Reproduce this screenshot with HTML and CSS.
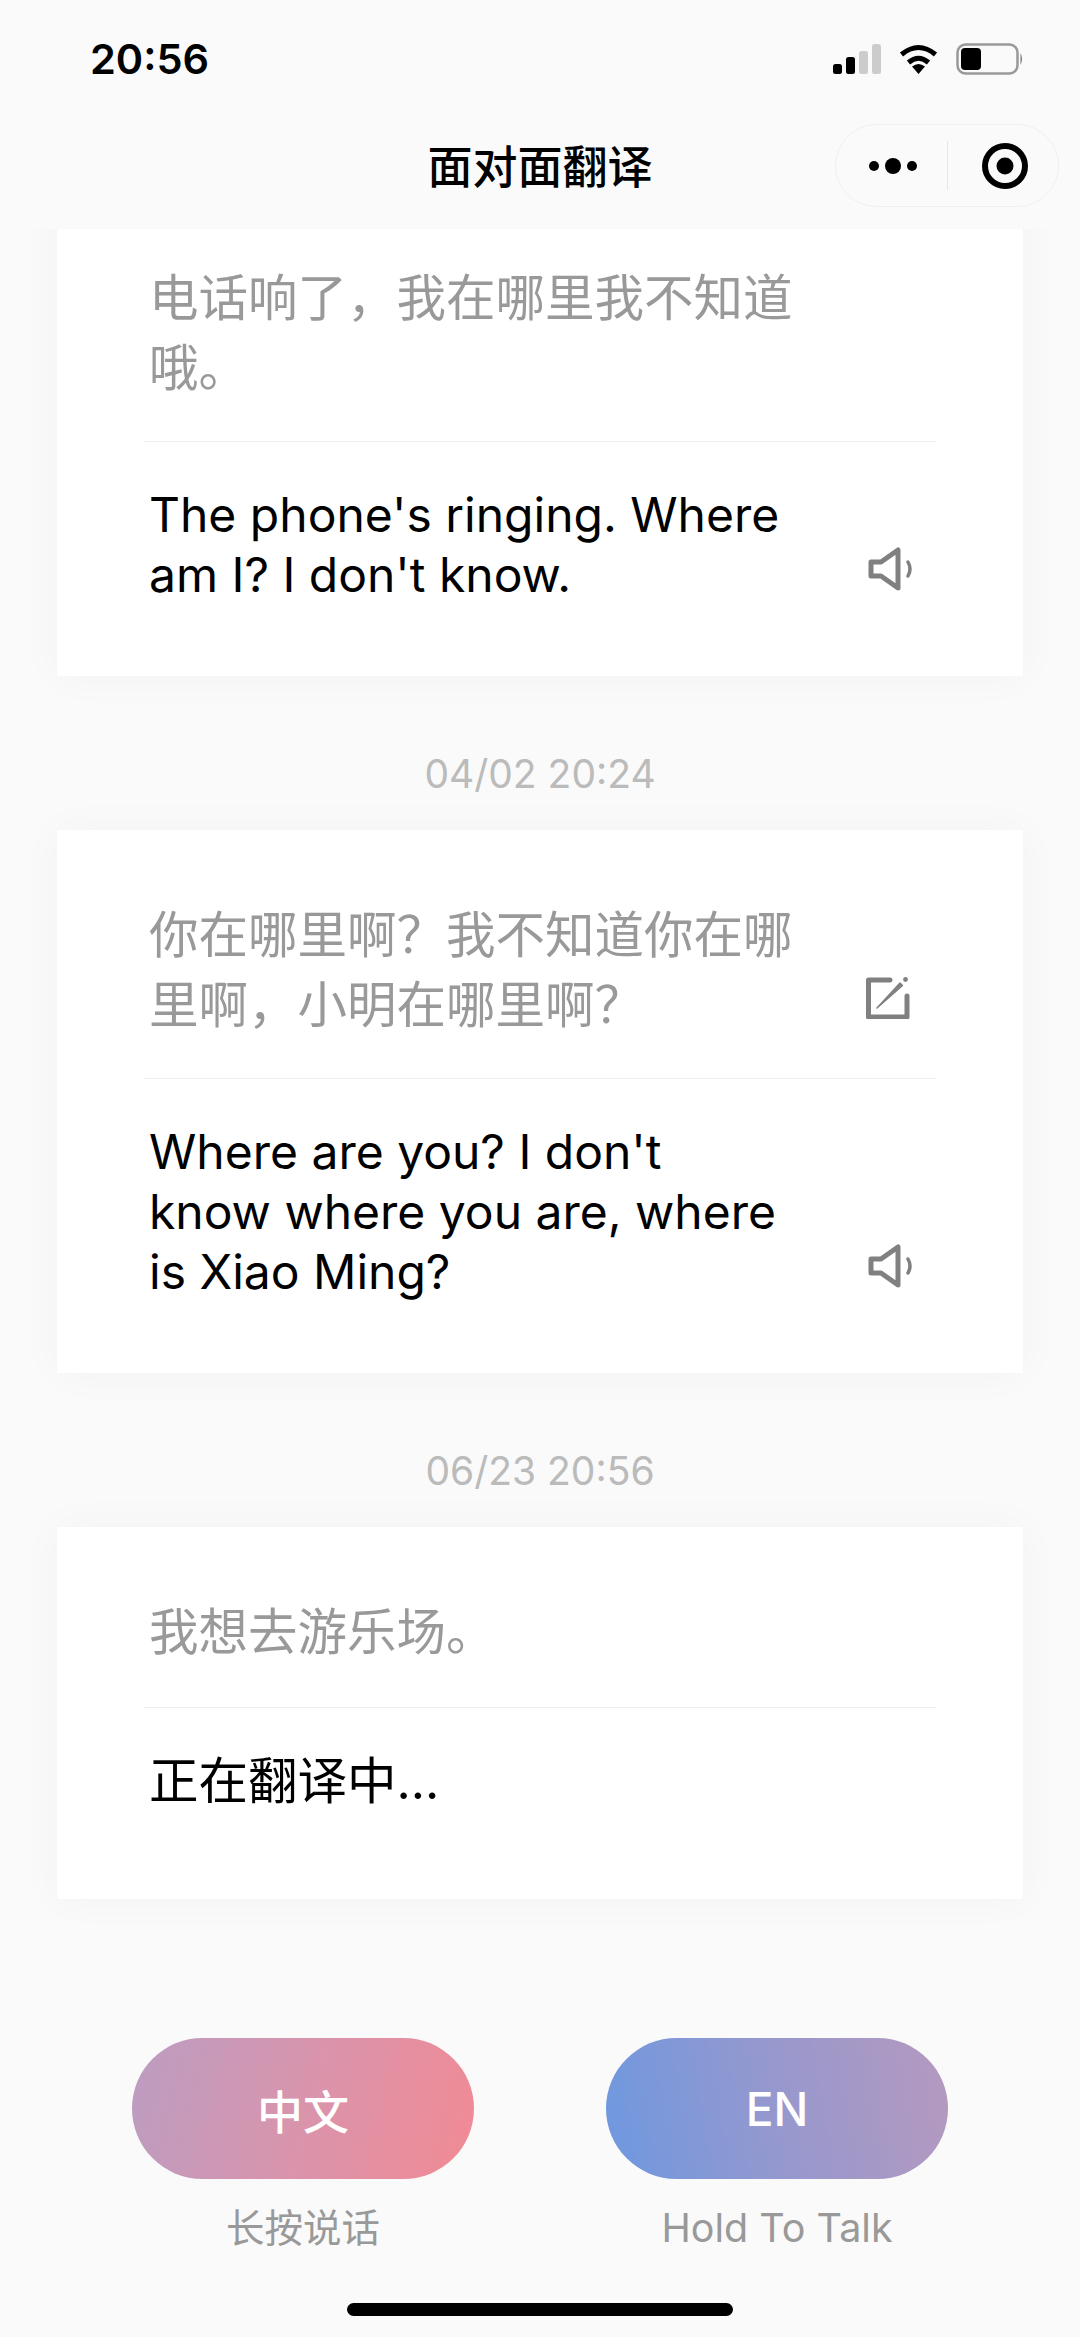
FILE: index.html
```html
<!DOCTYPE html>
<html lang="zh-CN">
<head>
    <meta charset="UTF-8">
    <meta name="viewport" content="width=device-width, initial-scale=1.0">
    <title>面对面翻译</title>
    <link rel="stylesheet" href="styles.css">
</head>
<body>
    <div class="page">
        <div class="status-bar">
            <span class="time">20:56</span>
            <div class="status-icons">
                <svg class="signal" width="48" height="30" viewBox="0 0 48 30">
                    <rect x="0" y="20" width="9" height="10" rx="2.5" fill="#000"/>
                    <rect x="13" y="13" width="9" height="17" rx="2.5" fill="#000"/>
                    <rect x="26" y="7" width="9" height="23" rx="2.5" fill="#ccc"/>
                    <rect x="39" y="0" width="9" height="30" rx="2.5" fill="#ccc"/>
                </svg>
                <svg class="wifi" width="41" height="30" viewBox="0 0 41 30">
                    <path d="M20.5 30 L14 22.5 Q20.5 17.5 27 22.5 Z" fill="#000"/>
                    <path d="M10.5 18.5 Q20.5 10 30.5 18.5" fill="none" stroke="#000" stroke-width="5"/>
                    <path d="M3.5 10.5 Q20.5 -3.5 37.5 10.5" fill="none" stroke="#000" stroke-width="5"/>
                </svg>
                <svg class="battery" width="67" height="32" viewBox="0 0 67 32">
                    <rect x="1.5" y="1.5" width="60" height="29" rx="8" fill="none" stroke="#999" stroke-width="2.5"/>
                    <rect x="5" y="5" width="20" height="22" rx="4" fill="#000"/>
                    <path d="M64.5 10 Q67.5 16 64.5 22 Z" fill="#777"/>
                </svg>
            </div>
        </div>

        <div class="nav">
            <div></div>
            <div class="nav-title">面对面翻译</div>
            <div class="capsule">
                <div class="capsule-btn">
                    <svg width="50" height="16" viewBox="0 0 50 16">
                        <circle cx="6" cy="8" r="5" fill="#000"/>
                        <circle cx="25" cy="8" r="8" fill="#000"/>
                        <circle cx="44" cy="8" r="5" fill="#000"/>
                    </svg>
                </div>
                <div class="capsule-line"></div>
                <div class="capsule-btn">
                    <svg width="46" height="46" viewBox="0 0 46 46">
                        <circle cx="23" cy="23" r="20" fill="none" stroke="#000" stroke-width="6"/>
                        <circle cx="23" cy="23" r="8.5" fill="#000"/>
                    </svg>
                </div>
            </div>
        </div>

        <div class="chat">
            <div class="list">
                <div class="card">
                    <div class="row source">
                        <div class="text">电话响了，我在哪里我不知道哦。</div>
                    </div>
                    <div class="row target">
                        <div class="text">The phone's ringing. Where am I? I don't know.</div>
                        <svg class="icon speaker" width="46" height="44" viewBox="0 0 46 44">
                            <path d="M3 15 H13 L30 3 V41 L13 29 H3 Z" fill="none" stroke="#808080" stroke-width="5" stroke-linejoin="round"/>
                            <path d="M40 15 Q44 22 40 29" fill="none" stroke="#808080" stroke-width="3.5" stroke-linecap="round"/>
                        </svg>
                    </div>
                </div>

                <div class="time-label">04/02 20:24</div>

                <div class="card">
                    <div class="row source">
                        <div class="text">你在哪里啊？我不知道你在哪里啊，小明在哪里啊？</div>
                        <svg class="icon edit" width="44" height="42" viewBox="0 0 44 42">
                            <path d="M24 3 H2.5 V40 H41 V19" fill="none" stroke="#808080" stroke-width="5" stroke-linecap="round" stroke-linejoin="round"/>
                            <path d="M11 31 L34 6 L36.5 8.5 Z" fill="#808080" stroke="#808080" stroke-width="1.5" stroke-linejoin="round"/>
                            <circle cx="39.5" cy="2.5" r="2.4" fill="#808080"/>
                        </svg>
                    </div>
                    <div class="row target">
                        <div class="text">Where are you? I don't know where you are, where is Xiao Ming?</div>
                        <svg class="icon speaker" width="46" height="44" viewBox="0 0 46 44">
                            <path d="M3 15 H13 L30 3 V41 L13 29 H3 Z" fill="none" stroke="#808080" stroke-width="5" stroke-linejoin="round"/>
                            <path d="M40 15 Q44 22 40 29" fill="none" stroke="#808080" stroke-width="3.5" stroke-linecap="round"/>
                        </svg>
                    </div>
                </div>

                <div class="time-label">06/23 20:56</div>

                <div class="card pending">
                    <div class="row source">
                        <div class="text">我想去游乐场。</div>
                    </div>
                    <div class="row target">
                        <div class="text">正在翻译中...</div>
                    </div>
                </div>
            </div>
        </div>

        <div class="footer">
            <div class="talk-buttons">
                <div class="talk">
                    <div class="talk-btn zh">中文</div>
                    <div class="talk-hint">长按说话</div>
                </div>
                <div class="talk">
                    <div class="talk-btn en">EN</div>
                    <div class="talk-hint latin">Hold To Talk</div>
                </div>
            </div>
            <div class="home-bar"></div>
        </div>
    </div>
</body>
</html>
```

FILE: styles.css
```css
* {
    box-sizing: border-box;
}
body {
    margin: 0;
    background: #fafafa;
    font-family: Inter, "Noto Sans CJK SC", sans-serif;
}
.page {
    width: 1080px;
    height: 2337px;
    display: flex;
    flex-direction: column;
    overflow: hidden;
    background: #fafafa;
}

/* status bar */
.status-bar {
    height: 107px;
    flex-shrink: 0;
    display: flex;
    justify-content: space-between;
    align-items: flex-start;
    padding: 35px 57px 0 90px;
}
.time {
    font-size: 41.5px;
    line-height: 48px;
    font-weight: 600;
    color: #000;
}
.status-icons {
    display: flex;
    align-items: center;
    gap: 17px;
    padding-top: 8px;
}

/* nav */
.nav {
    height: 122px;
    flex-shrink: 0;
    display: grid;
    grid-template-columns: 1fr auto 1fr;
    align-items: center;
    padding-bottom: 6px;
}
.nav-title {
    margin-bottom: 2px;
    font-size: 45px;
    font-weight: 500;
    color: #000;
}
.capsule {
    justify-self: end;
    width: 224px;
    height: 83px;
    margin-right: 21px;
    border: 1px solid #f0f0f0;
    border-radius: 42px;
    display: flex;
    align-items: center;
}
.capsule-btn {
    flex: 1;
    display: flex;
    justify-content: center;
    align-items: center;
    padding: 2px 0 0 4px;
}
.capsule-btn svg {
    display: block;
}
.capsule-line {
    width: 1px;
    height: 49px;
    background: #e6e6e6;
}

/* chat */
.chat {
    flex: 1;
    min-height: 0;
    overflow: hidden;
}
.list {
    margin-top: -36px;
}
.card {
    margin: 0 57px;
    padding: 0 87px;
    background: #fff;
    box-shadow: 0 0 40px rgba(0, 0, 0, 0.035);
}
.row {
    display: flex;
    justify-content: space-between;
    padding: 0 0 0 5px;
}
.text {
    width: 650px;
}
.source {
    padding-top: 70px;
    padding-bottom: 38px;
    border-bottom: 1px solid #eeeeee;
    align-items: flex-end;
    font-size: 49.5px;
    line-height: 70px;
    color: #999;
}
.target {
    padding-top: 43px;
    padding-bottom: 71px;
    align-items: flex-end;
    font-size: 48px;
    line-height: 60px;
    color: #000;
}
.target .text {
    width: 635px;
}
.pending .source {
    padding-bottom: 40px;
}
.pending .target {
    padding-bottom: 88px;
    font-size: 49.5px;
}
.icon {
    flex-shrink: 0;
}
.speaker {
    margin: 0 22px 14px 0;
}
.edit {
    margin: 0 26px 21px 0;
}
.time-label {
    height: 154px;
    padding-top: 73px;
    line-height: 50px;
    text-align: center;
    font-size: 39px;
    color: #bbb;
}

/* footer */
.footer {
    flex-shrink: 0;
    display: flex;
    flex-direction: column;
    align-items: center;
}
.talk-buttons {
    width: 100%;
    display: flex;
    justify-content: space-between;
    padding: 0 132px;
}
.talk {
    width: 342px;
    display: flex;
    flex-direction: column;
    align-items: center;
}
.talk-btn {
    width: 342px;
    height: 141px;
    border-radius: 71px;
    display: flex;
    justify-content: center;
    align-items: center;
    color: #fff;
    font-size: 46px;
    font-weight: 500;
}
.talk-btn.zh {
    background: linear-gradient(105deg, #bb9dc2 0%, #d994ac 50%, #f28a94 100%);
}
.talk-btn.en {
    background: linear-gradient(80deg, #6e98e0 0%, #9a98cc 55%, #b599bf 100%);
}
.talk-hint {
    margin-top: 24px;
    font-size: 38.5px;
    line-height: 50px;
    color: #999;
}
.talk-hint.latin {
    font-size: 39.5px;
}
.home-bar {
    width: 386px;
    height: 13px;
    margin: 50px 0 21px;
    border-radius: 7px;
    background: #000;
}
```
